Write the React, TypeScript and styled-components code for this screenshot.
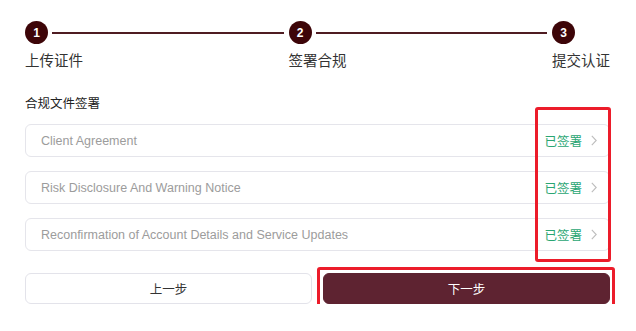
import React from "react";
import styled, { createGlobalStyle } from "styled-components";

const GlobalStyle = createGlobalStyle`
  html, body { margin: 0; padding: 0; background: #ffffff; }
  body { font-family: "Liberation Sans", "Noto Sans CJK SC", Arial, sans-serif; }
  * { box-sizing: border-box; }
`;

const Page = styled.div`
  width: 636px;
  padding: 21px 26px 0 25px;
  font-family: "Liberation Sans", "Noto Sans CJK SC", Arial, sans-serif;
`;

const Stepper = styled.div`
  display: flex;
`;

const Step = styled.div<{ $last?: boolean }>`
  flex: ${(p) => (p.$last ? "0 0 auto" : "1 1 0")};
  display: flex;
  flex-direction: column;
`;

const StepHead = styled.div`
  display: flex;
  align-items: center;
  height: 23px;
`;

const Circle = styled.div`
  width: 23px;
  height: 23px;
  flex: 0 0 23px;
  border-radius: 50%;
  background: #3d0508;
  color: #ffffff;
  font-size: 12px;
  font-weight: 700;
  display: flex;
  align-items: center;
  justify-content: center;
`;

const Line = styled.div`
  flex: 1;
  height: 2px;
  background: #4f1c22;
  margin: 0 5px 0 4px;
`;

const StepLabel = styled.div`
  margin-top: 7px;
  font-size: 14.5px;
  line-height: 20px;
  color: #333333;
  white-space: nowrap;
`;

const SectionTitle = styled.div`
  margin-top: 25px;
  font-size: 12.5px;
  line-height: 16px;
  color: #222222;
`;

const RowList = styled.div`
  position: relative;
  margin-top: 12px;
  display: flex;
  flex-direction: column;
  gap: 14px;
`;

const Row = styled.div`
  height: 33px;
  border: 1px solid #e5e5eb;
  border-radius: 6px;
  padding: 0 12px 0 15px;
  display: flex;
  align-items: center;
  justify-content: space-between;
`;

const RowText = styled.span`
  font-size: 12.5px;
  color: #9c9c9c;
`;

const Status = styled.span`
  display: flex;
  align-items: center;
  gap: 9px;
  font-size: 12.5px;
  color: #2aa673;
`;

const Highlight = styled.div<{ $inset: string }>`
  position: absolute;
  inset: ${(p) => p.$inset};
  border: 3.5px solid #ec1c2a;
  border-radius: 3px;
  pointer-events: none;
`;

const Buttons = styled.div`
  margin-top: 22px;
  display: grid;
  grid-template-columns: 287px 1fr;
  gap: 11px;
`;

const Button = styled.button<{ $primary?: boolean }>`
  position: relative;
  height: 31px;
  border-radius: 6px;
  border: 1px solid ${(p) => (p.$primary ? "#5e2331" : "#e3e3ea")};
  background: ${(p) => (p.$primary ? "#5e2331" : "#ffffff")};
  color: ${(p) => (p.$primary ? "#ffffff" : "#333333")};
  font-family: "Liberation Sans", "Noto Sans CJK SC", sans-serif;
  font-size: 12.5px;
  padding: 0;
  cursor: pointer;
`;

const Chevron = () => (
  <svg width="6" height="11" viewBox="0 0 6 11" fill="none">
    <polyline points="0.8,0.8 5.2,5.5 0.8,10.2" stroke="#bdbdbd" strokeWidth="1.1" />
  </svg>
);

const steps = ["上传证件", "签署合规", "提交认证"];
const docs = [
  "Client Agreement",
  "Risk Disclosure And Warning Notice",
  "Reconfirmation of Account Details and Service Updates",
];

export default function App() {
  return (
    <>
      <GlobalStyle />
      <Page>
        <Stepper>
          {steps.map((s, i) => {
            const last = i === steps.length - 1;
            return (
              <Step key={s} $last={last}>
                <StepHead>
                  <Circle>{i + 1}</Circle>
                  {!last && <Line />}
                </StepHead>
                <StepLabel>{s}</StepLabel>
              </Step>
            );
          })}
        </Stepper>
        <SectionTitle>合规文件签署</SectionTitle>
        <RowList>
          {docs.map((d) => (
            <Row key={d}>
              <RowText>{d}</RowText>
              <Status>
                已签署
                <Chevron />
              </Status>
            </Row>
          ))}
          <Highlight $inset="-17px -1px -11px 510px" />
        </RowList>
        <Buttons>
          <Button>上一步</Button>
          <Button $primary>
            下一步
            <Highlight $inset="-7px -6px -6px -7px" />
          </Button>
        </Buttons>
      </Page>
    </>
  );
}
